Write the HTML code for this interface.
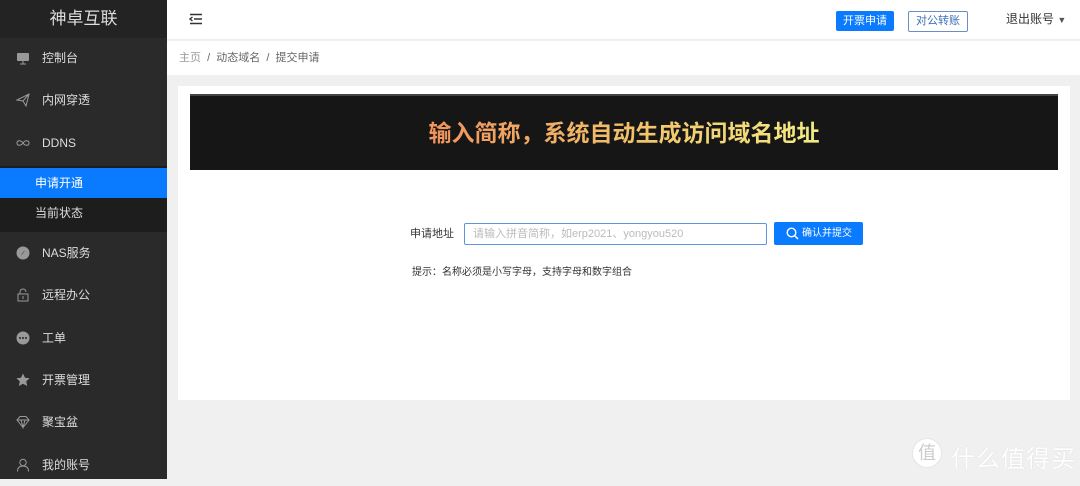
<!DOCTYPE html>
<html><head><meta charset="utf-8"><style>
*{margin:0;padding:0;box-sizing:border-box}
body{width:1080px;height:479px;overflow:hidden;background:#f0f0f0;font-family:"Liberation Sans","Noto Sans CJK SC",sans-serif;position:relative}
.side{position:absolute;left:0;top:0;width:167px;height:479px;background:#2b2a2a}
.logo{height:38px;background:#232323;color:#ddd;font-size:17px;text-align:center;line-height:38px}
.it{position:absolute;left:0;width:167px;height:42px;color:#ddd;font-size:12px;line-height:42px;padding-left:42px}
.ic{position:absolute;left:16px;top:14px;width:14px;height:14px}
.sub{position:absolute;left:0;top:166px;width:167px;height:66px;background:#1d1d1d}
.sub div{height:30px;line-height:30px;padding-left:35px;color:#ddd;font-size:12px}
.sub .a{background:#0a7bff;color:#fff;margin-top:2px}
.hdr{position:absolute;left:167px;top:0;right:0;height:40px;background:#fff;border-bottom:1px solid #eee}
.bc{position:absolute;left:167px;top:41px;right:0;height:34px;background:#fff;font-size:11px;color:#666;line-height:34px;padding-left:12px}
.bc span{color:#999}
.card{position:absolute;left:178px;top:86px;width:892px;height:314px;background:#fff}
.ban{position:absolute;left:12px;top:8px;width:868px;height:76px;background:#161616;border-top:2px solid #444;text-align:center;line-height:74px;font-size:23px;font-weight:bold}
.ban span{background:linear-gradient(90deg,#f0935c,#f2c96c 60%,#f4ec84);-webkit-background-clip:text;background-clip:text;color:transparent}
</style></head><body>
<div class="side">
<div class="logo">神卓互联</div>
<div class="it" style="top:37px"><svg class="ic" viewBox="0 0 14 14"><rect x="1" y="2" width="12" height="8" rx="1" fill="#999"/><path d="M7 10v3M4 13h6" stroke="#999"/></svg>控制台</div>
<div class="it" style="top:79px"><svg class="ic" viewBox="0 0 14 14"><path d="M1 7L13 1L10 13L7 8ZM7 8L13 1" fill="none" stroke="#999"/></svg>内网穿透</div>
<div class="it" style="top:122px"><svg class="ic" viewBox="0 0 14 14"><path d="M7 7c-2-3-6-3-6 0s4 3 6 0c2-3 6-3 6 0s-4 3-6 0" fill="none" stroke="#999"/></svg>DDNS</div>
<div class="sub"><div class="a">申请开通</div><div>当前状态</div></div>
<div class="it" style="top:232px"><svg class="ic" viewBox="0 0 14 14"><circle cx="7" cy="7" r="6.5" fill="#999"/><path d="M9 4L6 8 5 10 8 6Z" fill="#2b2a2a"/></svg>NAS服务</div>
<div class="it" style="top:274px"><svg class="ic" viewBox="0 0 14 14"><rect x="2" y="6" width="10" height="7" fill="none" stroke="#999"/><path d="M4 6V4a3 3 0 0 1 6 0" fill="none" stroke="#999"/><path d="M7 8v3" stroke="#999"/></svg>远程办公</div>
<div class="it" style="top:317px"><svg class="ic" viewBox="0 0 14 14"><circle cx="7" cy="7" r="6.5" fill="#999"/><circle cx="4" cy="7" r="1" fill="#2b2a2a"/><circle cx="7" cy="7" r="1" fill="#2b2a2a"/><circle cx="10" cy="7" r="1" fill="#2b2a2a"/></svg>工单</div>
<div class="it" style="top:359px"><svg class="ic" viewBox="0 0 14 14"><path d="M7 0.5l2 4.3 4.6.5-3.4 3.1 1 4.6L7 10.7 2.8 13l1-4.6L.4 5.3 5 4.8Z" fill="#999"/></svg>开票管理</div>
<div class="it" style="top:401px"><svg class="ic" viewBox="0 0 14 14"><path d="M1 5L4 1.5h6L13 5 7 12.5ZM1 5h12M5 5l2 7.5L9 5" fill="none" stroke="#999"/></svg>聚宝盆</div>
<div class="it" style="top:444px"><svg class="ic" viewBox="0 0 14 14"><circle cx="7" cy="4.5" r="3.2" fill="none" stroke="#999"/><path d="M1.5 13.5c0-4 2.5-5.5 5.5-5.5s5.5 1.5 5.5 5.5" fill="none" stroke="#999"/></svg>我的账号</div>
</div>
<div class="hdr">
<svg style="position:absolute;left:22px;top:13px" width="14" height="12" viewBox="0 0 14 12"><path d="M1 1.5h12M5 6h8M1 10.5h12M3.5 4L1 6l2.5 2" fill="none" stroke="#333" stroke-width="1.4"/></svg>
<div style="position:absolute;left:669px;top:11px;width:58px;height:20px;background:#0a7bff;color:#fff;font-size:11px;line-height:20px;text-align:center;border-radius:2px">开票申请</div>
<div style="position:absolute;left:741px;top:11px;width:60px;height:21px;border:1px solid #6b8fc0;color:#3a6fb5;font-size:11px;line-height:19px;text-align:center;border-radius:2px">对公转账</div>
<div style="position:absolute;left:839px;top:10px;font-size:12px;color:#333">退出账号 <span style="font-size:9px;color:#555">▼</span></div>
</div>
<div class="bc"><span>主页</span> &nbsp;/&nbsp; 动态域名 &nbsp;/&nbsp; 提交申请</div>
<div class="card">
<div class="ban"><span>输入简称，系统自动生成访问域名地址</span></div>
<div style="position:absolute;left:232px;top:139px;font-size:11px;color:#333">申请地址</div>
<div style="position:absolute;left:286px;top:137px;width:303px;height:22px;border:1px solid #5b97d8;border-radius:2px;font-size:11px;color:#bbb;line-height:20px;padding-left:8px">请输入拼音简称，如erp2021、yongyou520</div>
<div style="position:absolute;left:596px;top:136px;width:89px;height:23px;background:#0a7bff;color:#fff;font-size:10px;line-height:23px;border-radius:2px;padding-left:28px"><svg style="position:absolute;left:12px;top:5px" width="13" height="13" viewBox="0 0 13 13"><circle cx="5.5" cy="5.5" r="4.3" fill="none" stroke="#fff" stroke-width="1.4"/><path d="M8.5 8.5L12 12" stroke="#fff" stroke-width="1.5"/></svg>确认并提交</div>
<div style="position:absolute;left:234px;top:177px;font-size:10px;color:#333">提示：名称必须是小写字母，支持字母和数字组合</div>
</div>
<div style="position:absolute;left:912px;top:438px;width:30px;height:30px;border-radius:50%;background:#fff;border:1px solid #e5e5e5;color:#ccc;font-size:18px;text-align:center;line-height:28px">值</div>
<div style="position:absolute;left:951px;top:439px;font-size:24px;color:#fff;letter-spacing:1px;text-shadow:0 0 1px #ccc">什么值得买</div>
</body></html>
